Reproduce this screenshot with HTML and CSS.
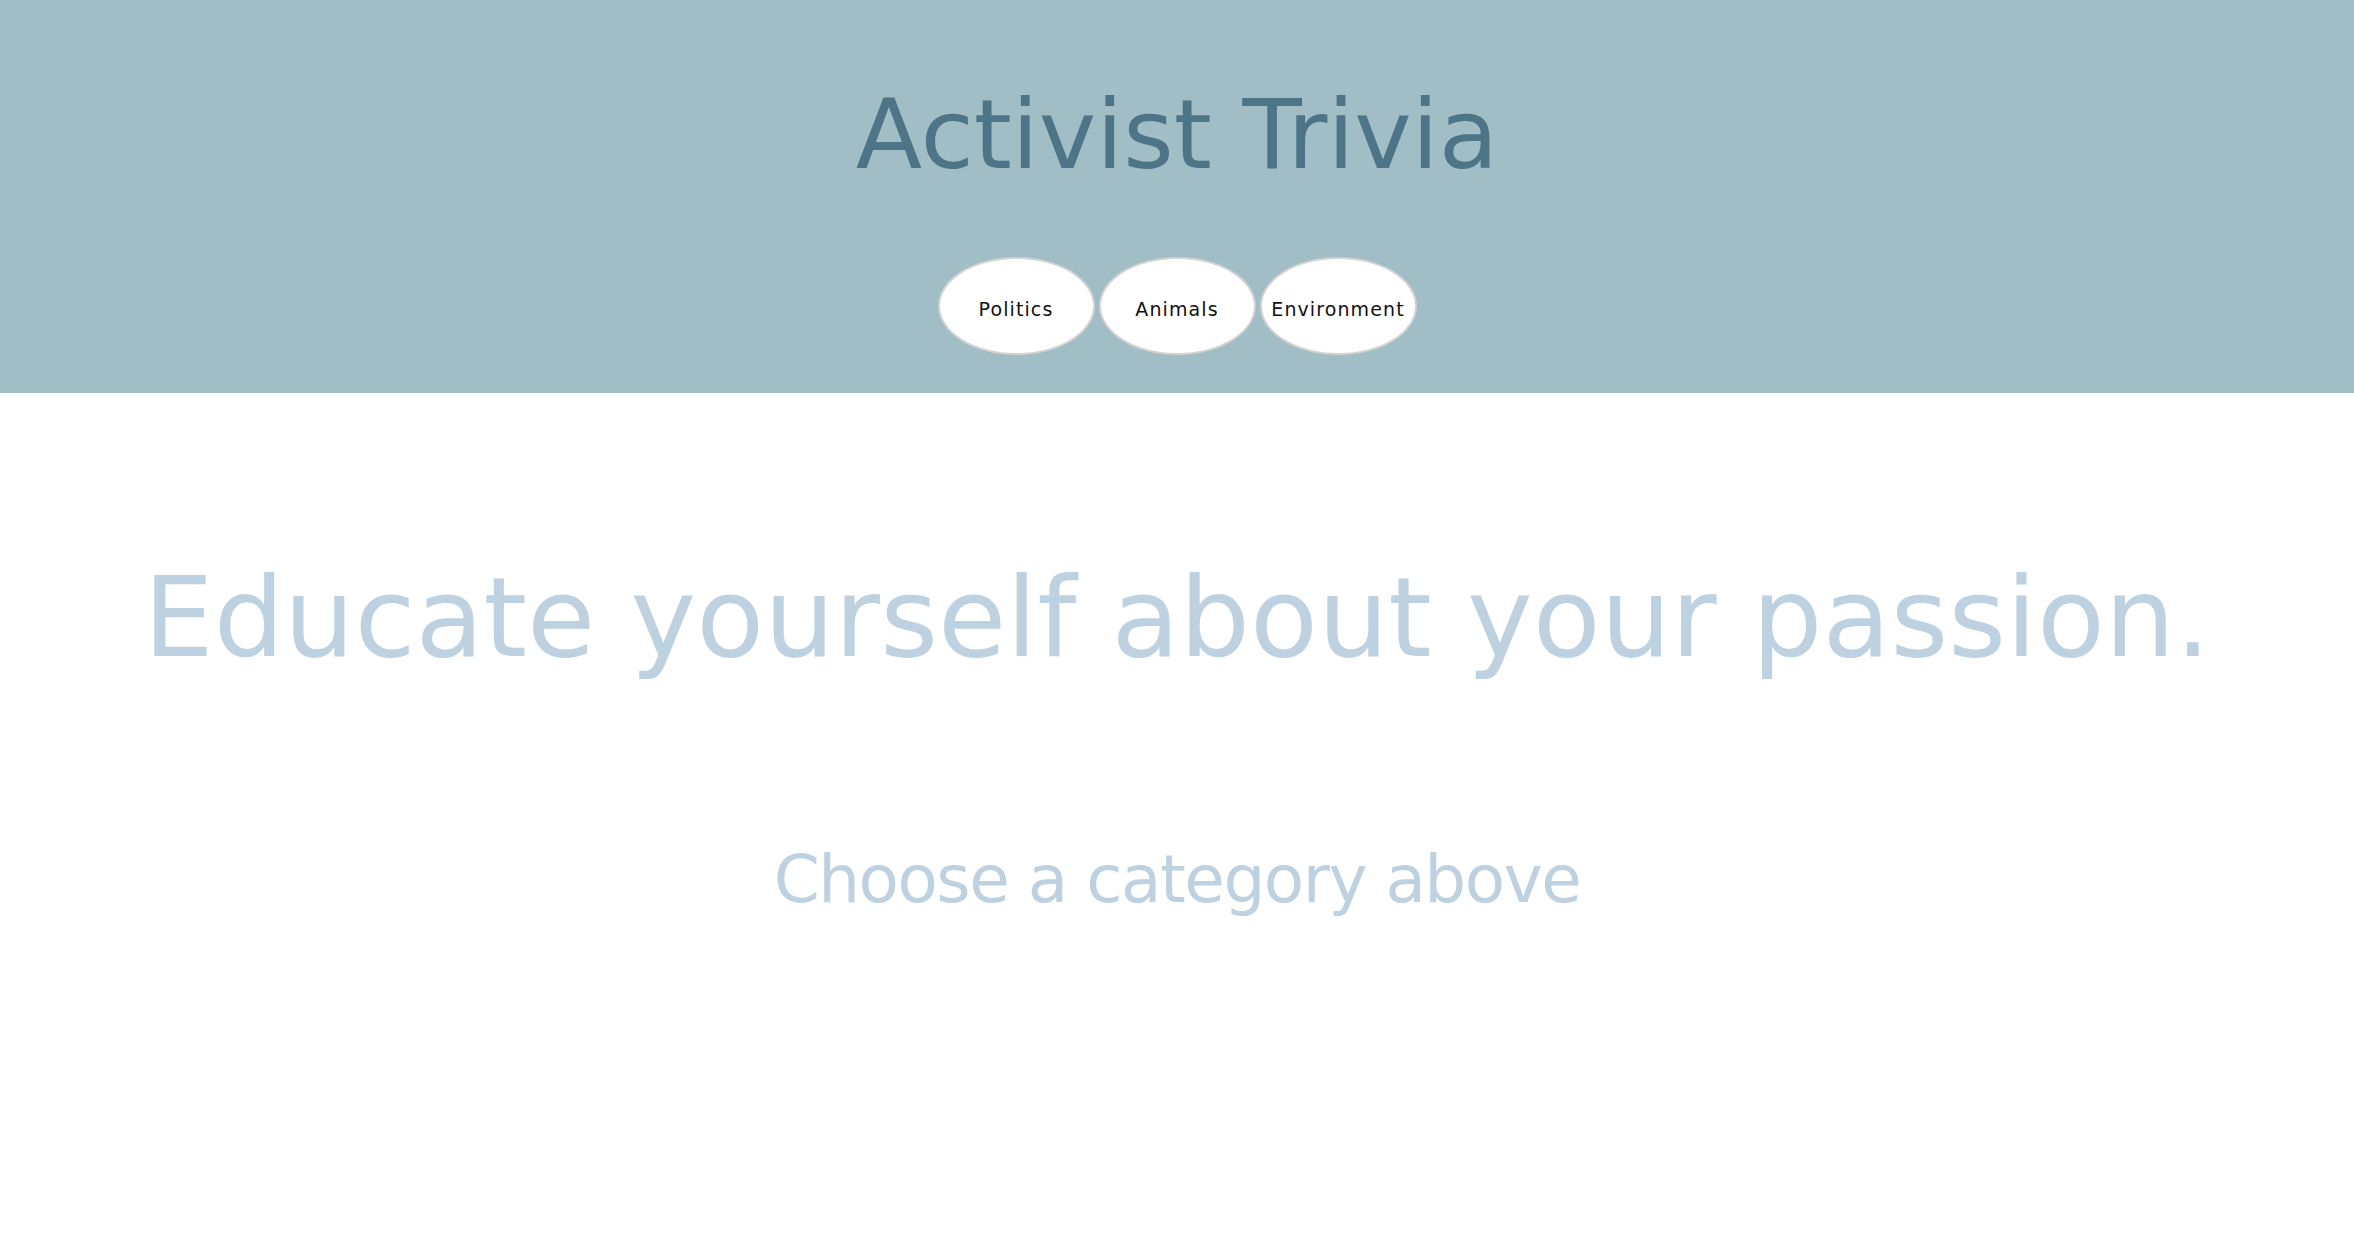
FILE: index.html
```html
<!DOCTYPE html>
<html lang="en">
<head>
<meta charset="utf-8">
<title>Activist Trivia</title>
<link rel="stylesheet" href="styles.css">
</head>
<body>
<header class="masthead">
  <h1 class="site-title">Activist Trivia</h1>
  <nav class="categories">
    <button class="category">Politics</button>
    <button class="category">Animals</button>
    <button class="category">Environment</button>
  </nav>
</header>
<main class="intro">
  <h2 class="tagline">Educate yourself about your passion.</h2>
  <p class="prompt">Choose a category above</p>
</main>
</body>
</html>
```
FILE: styles.css
```css
html, body {
  margin: 0;
  padding: 0;
  background: #ffffff;
}
body {
  font-family: "DejaVu Sans", "Liberation Sans", sans-serif;
}
.masthead {
  background: #a1bec6;
  padding: 77px 0 38px;
  display: flex;
  flex-direction: column;
  align-items: center;
}
.site-title {
  margin: 0;
  font-size: 97px;
  line-height: 1.2;
  font-weight: 400;
  color: #4d7587;
}
.categories {
  margin-top: 64px;
  display: flex;
  gap: 4px;
}
.category {
  width: 157px;
  height: 98px;
  box-sizing: border-box;
  border: 2px solid #d3d3d3;
  border-radius: 50%;
  background: #ffffff;
  color: #111111;
  font-family: "DejaVu Sans", "Liberation Sans", sans-serif;
  font-size: 19px;
  letter-spacing: 1.1px;
  padding: 5px 0 0;
}
.intro {
  display: flex;
  flex-direction: column;
  align-items: center;
}
.tagline {
  margin: 158px 0 0;
  font-size: 111px;
  line-height: 1.2;
  font-weight: 400;
  color: #bdd1e0;
}
.prompt {
  margin: 155px 0 0;
  font-size: 66px;
  line-height: 1.2;
  font-weight: 400;
  letter-spacing: -1.5px;
  color: #bdd1e0;
}
```
